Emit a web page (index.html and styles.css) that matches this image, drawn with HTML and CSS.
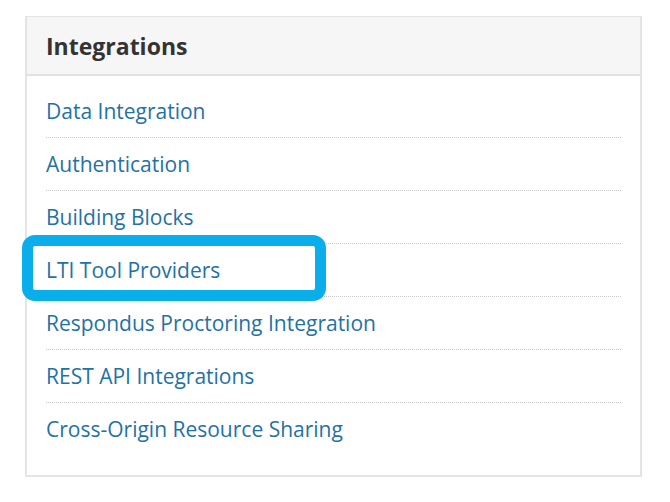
FILE: index.html
```html
<!DOCTYPE html>
<html lang="en">
<head>
<meta charset="utf-8">
<title>Integrations</title>
<link rel="stylesheet" href="styles.css">
</head>
<body>
  <section class="panel">
    <header class="panel-head">
      <h2 class="panel-title">Integrations</h2>
    </header>
    <ul class="link-list">
      <li class="link-item"><a href="#">Data Integration</a></li>
      <li class="link-item"><a href="#">Authentication</a></li>
      <li class="link-item"><a href="#">Building Blocks</a></li>
      <li class="link-item is-marked"><a href="#">LTI Tool Providers</a><span class="marker"></span></li>
      <li class="link-item"><a href="#">Respondus Proctoring Integration</a></li>
      <li class="link-item"><a href="#">REST API Integrations</a></li>
      <li class="link-item"><a href="#">Cross-Origin Resource Sharing</a></li>
    </ul>
  </section>
</body>
</html>
```

FILE: styles.css
```css
html, body {
  margin: 0;
  padding: 0;
  background: #ffffff;
}

body {
  padding: 16px 28px 26px 25px;
  font-family: "Open Sans", "Noto Sans", sans-serif;
}

.panel {
  border: 2px solid #e4e4e4;
  border-top-width: 1px;
  background: #ffffff;
}

.panel-head {
  background: #f6f6f6;
  border-bottom: 2px solid #e2e2e2;
  padding: 0 19px;
  height: 57px;
  display: flex;
  align-items: center;
}

.panel-title {
  margin: 0;
  font-size: 23px;
  font-weight: 700;
  color: #333333;
}

.link-list {
  list-style: none;
  margin: 0;
  padding: 9px 19px 20px;
}

.link-item {
  position: relative;
  height: 52px;
  display: flex;
  align-items: center;
  border-bottom: 1px dotted #c8c8c8;
}

.link-item:last-child {
  border-bottom: none;
}

.link-item a {
  font-size: 21px;
  color: #1f72a6;
  text-decoration: none;
}

/* callout ring drawn around one entry */
.marker {
  position: absolute;
  left: -24px;
  top: -9px;
  width: 282px;
  height: 44px;
  border: 11px solid #0aaeea;
  border-radius: 13px;
  pointer-events: none;
}
```
